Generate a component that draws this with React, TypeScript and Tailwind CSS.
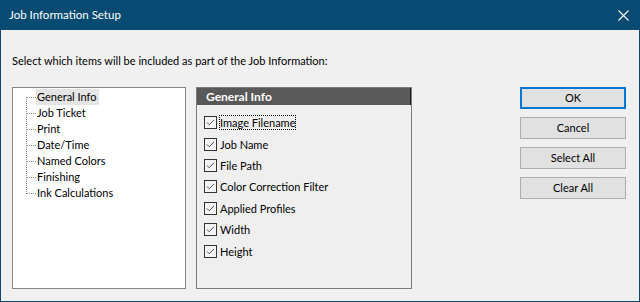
import React from "react";

const treeItems = [
  "General Info",
  "Job Ticket",
  "Print",
  "Date/Time",
  "Named Colors",
  "Finishing",
  "Ink Calculations",
];

const fields = [
  "Image Filename",
  "Job Name",
  "File Path",
  "Color Correction Filter",
  "Applied Profiles",
  "Width",
  "Height",
];

const buttons = ["OK", "Cancel", "Select All", "Clear All"];

function CheckBox() {
  return (
    <span className="flex h-[13px] w-[13px] shrink-0 items-center justify-center border border-[#333333] bg-[#f4f4f4]">
      <svg width="11" height="11" viewBox="0 0 11 11">
        <path d="M2 5.5 L4.2 7.7 L9 2.9" fill="none" stroke="#4a4a4a" strokeWidth="1" />
      </svg>
    </span>
  );
}

function TreeLines() {
  const rows = treeItems.length;
  return (
    <svg width="10" height={rows * 16} className="shrink-0">
      <line x1="0.5" y1="8" x2="0.5" y2={(rows - 1) * 16 + 9} stroke="#8a8a8a" strokeDasharray="1 1" />
      {treeItems.map((_, i) => (
        <line
          key={i}
          x1="1"
          y1={i * 16 + 8.5}
          x2="10"
          y2={i * 16 + 8.5}
          stroke="#8a8a8a"
          strokeDasharray="1 1"
        />
      ))}
    </svg>
  );
}

export default function App() {
  return (
    <div
      className="flex h-[302px] w-[640px] flex-col border-x border-b border-[#074a72] bg-[#f0f0f0] text-[11px] text-black"
      style={{ fontFamily: '"Segoe UI", Lato, sans-serif' }}
    >
      <div className="flex h-[30px] shrink-0 items-center justify-between bg-[#074a72] pl-[8px] pr-[10px] text-[11.5px] text-white">
        <span className="leading-[16px]">Job Information Setup</span>
        <svg width="11" height="11" viewBox="0 0 11 11">
          <path d="M0.5 0.5 L10.5 10.5 M10.5 0.5 L0.5 10.5" stroke="#ffffff" strokeWidth="1.1" />
        </svg>
      </div>

      <div className="flex flex-1 flex-col pl-[11px]">
        <p className="mt-[23px] leading-[16px]">
          Select which items will be included as part of the Job Information:
        </p>

        <div className="mt-[18px] flex items-start">
          <div className="flex h-[202px] w-[174px] border border-[#828790] bg-white pt-[1px] pl-[13px]">
            <TreeLines />
            <ul className="flex flex-col items-start">
              {treeItems.map((t, i) => (
                <li
                  key={t}
                  className={
                    "h-[16px] pl-[1px] pr-[3px] leading-[16px] " + (i === 0 ? "bg-[#e5e5e5]" : "")
                  }
                >
                  {t}
                </li>
              ))}
            </ul>
          </div>

          <div className="ml-[10px] flex h-[202px] w-[216px] flex-col border border-[#7a7a7a] bg-[#efefef]">
            <div className="flex h-[17px] items-center border-r border-[#1a1a1a] bg-[#595959] pl-[9px] text-[12px] font-bold text-white">
              General Info
            </div>
            <div className="mt-[7px] flex flex-col pl-[7px]">
              {fields.map((f, i) => (
                <div key={f} className="flex h-[21.4px] items-center gap-[2px]">
                  <CheckBox />
                  <span
                    className={
                      "leading-[13px] " +
                      (i === 0 ? "border border-dotted border-black" : "border border-transparent")
                    }
                  >
                    {f}
                  </span>
                </div>
              ))}
            </div>
          </div>

          <div className="ml-[108px] flex w-[106px] flex-col gap-[8px]">
            {buttons.map((b, i) => (
              <button
                key={b}
                className={
                  "flex h-[22px] items-center justify-center bg-[#e1e1e1] leading-[16px] " +
                  (i === 0 ? "border-2 border-[#0078d7]" : "border border-[#adadad]")
                }
              >
                {b}
              </button>
            ))}
          </div>
        </div>
      </div>
    </div>
  );
}
